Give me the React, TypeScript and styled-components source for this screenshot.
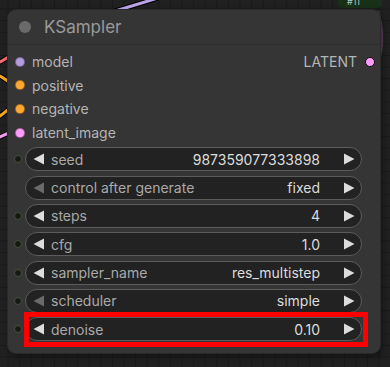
import React from "react";
import styled, { createGlobalStyle } from "styled-components";

interface SlotProps {
  color: string;
}

interface WidgetProps {
  label: string;
  value: string;
  linkable?: boolean;
  dimLeft?: boolean;
}

const GlobalStyle = createGlobalStyle`
  html, body {
    margin: 0;
    padding: 0;
    width: 390px;
    height: 367px;
    overflow: hidden;
    background-color: #202020;
    background-image:
      linear-gradient(#191919 1px, transparent 1px),
      linear-gradient(90deg, #191919 1px, transparent 1px);
    background-size: 11.6px 11.6px;
    background-position: -4px -3px;
    font-family: Inter, "Liberation Sans", sans-serif;
  }
`;

const Canvas = styled.div`
  position: relative;
  width: 390px;
  height: 367px;
  padding: 10px 0 0 8px;
  box-sizing: border-box;
`;

const Wires = styled.svg`
  position: absolute;
  left: 0;
  top: 0;
`;

const Node = styled.div`
  position: relative;
  width: 372px;
  height: 343px;
  background: #353535;
  border-radius: 8px;
  box-shadow: 0 0 0 1px #2a2a2a, 2px 3px 6px rgba(0, 0, 0, 0.45);
  display: flex;
  flex-direction: column;
`;

const Title = styled.div`
  height: 34px;
  display: flex;
  align-items: center;
  gap: 13px;
  padding-left: 11px;
  border-bottom: 1px solid #2d2d2d;
  font-size: 17px;
  color: #9a9a9a;
`;

const TitleDot = styled.span`
  width: 12px;
  height: 12px;
  border-radius: 50%;
  background: #6a6a6a;
`;

const Slots = styled.div`
  display: grid;
  grid-template-columns: 1fr auto;
  padding: 5px 0 0 7px;
`;

const SlotRow = styled.div`
  height: 23.6px;
  display: flex;
  align-items: center;
  gap: 7px;
  font-size: 14px;
  color: #b4b4b4;
`;

const OutRow = styled(SlotRow)`
  padding-right: 5px;
  gap: 8px;
`;

const Dot = styled.span<SlotProps>`
  width: 10px;
  height: 10px;
  border-radius: 50%;
  background: ${(p) => p.color};
  box-sizing: border-box;
  border: 1px solid rgba(0, 0, 0, 0.35);
`;

const OutDot = styled(Dot)`
  border-color: #111;
`;

const WidgetList = styled.div`
  display: flex;
  flex-direction: column;
  gap: 4.3px;
  padding: 3px 0 0 6px;
`;

const WidgetRow = styled.div`
  height: 24px;
  display: flex;
  align-items: center;
`;

const LinkDot = styled.span<{ $show: boolean }>`
  width: 8px;
  height: 8px;
  margin-right: 3px;
  border-radius: 50%;
  box-sizing: border-box;
  border: 1.5px solid ${(p) => (p.$show ? "#44523c" : "transparent")};
  background: ${(p) => (p.$show ? "#161a14" : "transparent")};
`;

const Pill = styled.div`
  width: 337px;
  height: 24px;
  box-sizing: border-box;
  border: 1px solid #5c5c5c;
  border-radius: 12px;
  background: #222222;
  display: flex;
  align-items: center;
  padding: 0 6px 0 7px;
  font-size: 14px;
`;

const Arrow = styled.svg<{ $dim?: boolean }>`
  flex: none;
  fill: ${(p) => (p.$dim ? "#6a6a6a" : "#dcdcdc")};
`;

const Label = styled.span`
  margin-left: 6px;
  flex: 1;
  color: #a9a9a9;
`;

const Value = styled.span`
  color: #dcdcdc;
  margin-right: 23px;
`;

const Highlight = styled.div`
  position: absolute;
  left: 16px;
  top: 302px;
  width: 344px;
  height: 35px;
  box-sizing: border-box;
  border: 5px solid #ff0000;
`;

function Widget({ label, value, linkable, dimLeft }: WidgetProps) {
  return (
    <WidgetRow>
      <LinkDot $show={!!linkable} />
      <Pill>
        <Arrow width="12" height="12" viewBox="0 0 12 12" $dim={dimLeft}>
          <polygon points="11,0.5 11,11.5 0.5,6" />
        </Arrow>
        <Label>{label}</Label>
        <Value>{value}</Value>
        <Arrow width="12" height="12" viewBox="0 0 12 12">
          <polygon points="1,0.5 1,11.5 11.5,6" />
        </Arrow>
      </Pill>
    </WidgetRow>
  );
}

const widgets: WidgetProps[] = [
  { label: "seed", value: "987359077333898", linkable: true },
  { label: "control after generate", value: "fixed", dimLeft: true },
  { label: "steps", value: "4", linkable: true },
  { label: "cfg", value: "1.0", linkable: true },
  { label: "sampler_name", value: "res_multistep", linkable: true },
  { label: "scheduler", value: "simple", linkable: true, dimLeft: true },
  { label: "denoise", value: "0.10", linkable: true },
];

function App() {
  return (
    <>
      <GlobalStyle />
      <Canvas>
        <Wires width="390" height="367" viewBox="0 0 390 367">
          <g fill="none" strokeLinecap="round">
            <path d="M0 62 C4 60 6 58 9 57" stroke="#000" strokeWidth="5" />
            <path d="M0 62 C4 60 6 58 9 57" stroke="#f26d6d" strokeWidth="3" />
            <path d="M0 76 C4 78 6 80 9 82" stroke="#000" strokeWidth="5" />
            <path d="M0 76 C4 78 6 80 9 82" stroke="#f5a623" strokeWidth="3" />
            <path d="M0 116 C4 113 6 111 9 109" stroke="#000" strokeWidth="5" />
            <path d="M0 116 C4 113 6 111 9 109" stroke="#f5a623" strokeWidth="3" />
            <path d="M0 137 C4 135 6 134 9 133" stroke="#000" strokeWidth="5" />
            <path d="M0 137 C4 135 6 134 9 133" stroke="#f29cf0" strokeWidth="3" />
            <path d="M112 12 C128 7 142 3 158 -2" stroke="#000" strokeWidth="5" />
            <path d="M112 12 C128 7 142 3 158 -2" stroke="#b9a3e6" strokeWidth="3" />
            <path d="M378 12 C382 26 383 42 380 56" stroke="#5a3a5a" strokeWidth="3" />
          </g>
          <rect x="338" y="-10" width="44" height="18" rx="5" fill="#183018" />
          <text x="347" y="5" fontSize="9" fill="#b8c8b8" fontFamily="Inter, sans-serif">#11</text>
        </Wires>
        <Node>
          <Title>
            <TitleDot />
            KSampler
          </Title>
          <Slots>
            <div>
              <SlotRow><Dot color="#b39ddb" />model</SlotRow>
              <SlotRow><Dot color="#ffa931" />positive</SlotRow>
              <SlotRow><Dot color="#ffa931" />negative</SlotRow>
              <SlotRow><Dot color="#ff9cf9" />latent_image</SlotRow>
            </div>
            <div>
              <OutRow>LATENT<OutDot color="#ff9cf9" /></OutRow>
            </div>
          </Slots>
          <WidgetList>
            {widgets.map((w) => (
              <Widget key={w.label} {...w} />
            ))}
          </WidgetList>
          <Highlight />
        </Node>
      </Canvas>
    </>
  );
}

export default App;
